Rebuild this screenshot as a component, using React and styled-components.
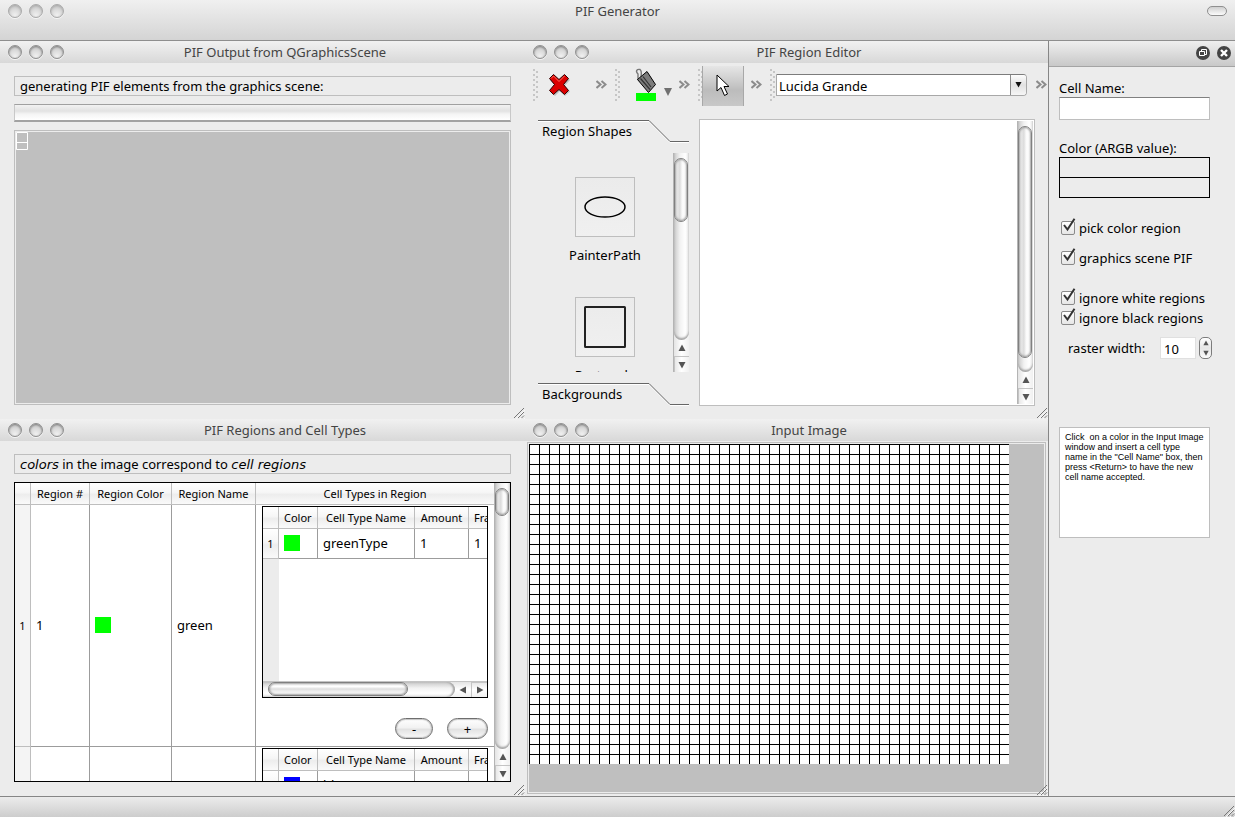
import React from "react";
import styled, { createGlobalStyle, css } from "styled-components";

const GlobalStyle = createGlobalStyle`
  *, *::before, *::after { box-sizing: border-box; }
  html, body { margin: 0; background: #ececec; }
  body, button, input, select, table {
    font-family: "Noto Sans", "Open Sans", sans-serif;
    font-size: 13px;
    line-height: 20px;
    color: #000;
  }
  button { padding: 0; margin: 0; border: 0; background: none; }
`;

const lineGrey = "#bebebe";
const barFill = "linear-gradient(#f0f0f0, #d4d4d4)";
const headFill = "linear-gradient(#fff 0%, #f6f6f6 45%, #ededed 55%, #fafafa 100%)";

/* ---------- application frame ---------- */

const Shell = styled.div`
  display: flex;
  flex-direction: column;
  height: 100vh;
`;

const AppBar = styled.header`
  display: flex;
  flex: none;
  justify-content: space-between;
  align-items: flex-start;
  height: 41px;
  padding: 4px 8px;
  background: ${barFill};
  border-bottom: 1px solid #8e8e8e;
`;

const AppTitle = styled.h1`
  margin: 0;
  font-size: 13px;
  font-weight: 400;
  line-height: 14px;
  color: #444;
`;

const BarSide = styled.div`
  display: flex;
  justify-content: ${(p) => (p.$end ? "flex-end" : "flex-start")};
  flex: 1;
`;

const ToolbarPill = styled.button`
  width: 20px;
  height: 10px;
  margin-top: 2px;
  border: 1px solid #8f8f8f;
  border-radius: 5px;
  background: linear-gradient(#cfcfcf, #fbfbfb);
`;

const Workspace = styled.main`
  display: flex;
  flex: 1;
  min-height: 0;
`;

const Desktop = styled.div`
  flex: 1;
  display: grid;
  grid-template-columns: minmax(0, 525fr) minmax(0, 523fr);
  grid-template-rows: minmax(0, 378fr) minmax(0, 377fr);
`;

const StatusBar = styled.footer`
  position: relative;
  flex: none;
  height: 21px;
  border-top: 1px solid #868686;
  background: linear-gradient(#ececec, #cdcdcd);
`;

/* ---------- windows ---------- */

const LightRow = styled.div`
  display: flex;
  gap: 7px;
`;

const Light = styled.button`
  width: 14px;
  height: 14px;
  border-radius: 50%;
  border: 1px solid ${(p) => (p.$soft ? "#aaa" : "#909090")};
  background: radial-gradient(circle at 50% 85%, #f0f0f0 0%, #dcdcdc 45%, #c8c8c8 80%);
  box-shadow: inset 0 1px 2px ${(p) => (p.$soft ? "#aaa" : "#808080")}, 0 1px 0 #f4f4f4;
`;

function Lights({ soft }) {
  return (
    <LightRow>
      {["Close", "Minimize", "Zoom"].map((n) => (
        <Light key={n} $soft={soft} aria-label={n} />
      ))}
    </LightRow>
  );
}

const Pane = styled.section`
  position: relative;
  display: flex;
  flex-direction: column;
  min-height: 0;
`;

const PaneBar = styled.div`
  display: flex;
  align-items: center;
  flex: none;
  height: 22px;
  padding: 0 19px 0 8px;
  background: linear-gradient(#f1f1f1, #d8d8d8);
`;

const PaneTitle = styled.h2`
  flex: 1;
  margin: 0;
  font-size: 13px;
  font-weight: 400;
  text-align: center;
  line-height: 22px;
  color: #444;
`;

const GripSvg = styled.svg`
  position: absolute;
  right: 0;
  bottom: 0;
`;

function ResizeGrip() {
  return (
    <GripSvg width="12" height="12" viewBox="0 0 12 12" aria-hidden="true">
      <path d="M2 12L12 2M6 12L12 6M10 12L12 10" transform="translate(0 1)" stroke="#f8f8f8" fill="none" />
      <path d="M1 11L11 1M5 11L11 5M8.500 11L11 8.500" stroke="#777" fill="none" />
    </GripSvg>
  );
}

function Window({ title, children }) {
  return (
    <Pane>
      <PaneBar>
        <Lights />
        <PaneTitle>{title}</PaneTitle>
      </PaneBar>
      {children}
      <ResizeGrip />
    </Pane>
  );
}

const PaneBody = styled.div`
  flex: 1;
  display: flex;
  flex-direction: column;
  gap: 8px;
  min-height: 0;
  padding: 13px 14px 14px;
`;

const Caption = styled.p`
  flex: none;
  height: 20px;
  margin: 0;
  padding: 0 5px;
  line-height: 18px;
  border: 1px solid ${lineGrey};
`;

const Slanted = styled.em`
  font-family: "DejaVu Sans", sans-serif;
`;

/* ---------- scroll bars ---------- */

const Scroll = styled.div`
  display: flex;
  flex: none;
  ${(p) =>
    p.$across
      ? css`
          height: 16px;
          background: linear-gradient(#e4e4e4, #fff 50%, #f0f0f0);
          border-top: 1px solid #c4c4c4;
        `
      : css`
          flex-direction: column;
          width: 16px;
          background: linear-gradient(to right, #e4e4e4, #fff 50%, #f0f0f0);
          border-left: 1px solid #b4b4b4;
        `}
`;

const Track = styled.div`
  flex: 1;
  min-width: 0;
  min-height: 0;
  overflow: hidden;
  ${(p) =>
    p.$across
      ? css`
          padding-left: 5px;
          border-radius: 0 8px 8px 0;
          background: linear-gradient(#c9c9c9, #f2f2f2 40%, #fff 75%, #e8e8e8);
          box-shadow: inset -2px 0 2px #a4a4a4;
        `
      : css`
          padding-top: 5px;
          border-radius: 0 0 8px 8px;
          background: linear-gradient(to right, #c9c9c9, #f2f2f2 40%, #fff 75%, #e8e8e8);
          box-shadow: inset 0 -2px 2px #a4a4a4;
        `}
`;

const Thumb = styled.div`
  border: 1px solid #808080;
  border-radius: 8px;
  box-shadow: inset 0 0 2px 1px #a0a0a0;
  ${(p) =>
    p.$across
      ? css`
          width: ${p.$size};
          height: 14px;
          background: linear-gradient(#f4f4f4 0%, #fff 30%, #dedede 50%, #fff 90%);
        `
      : css`
          height: ${p.$size};
          width: 14px;
          background: linear-gradient(to right, #f4f4f4 0%, #dcdcdc 40%, #fafafa 60%, #fff 90%);
        `}
`;

const Arrow = styled.button`
  display: flex;
  align-items: center;
  justify-content: center;
  flex: none;
  width: ${(p) => (p.$across ? "16px" : "100%")};
  height: ${(p) => (p.$across ? "100%" : "16px")};
  & + & {
    ${(p) => (p.$across ? "border-left" : "border-top")}: 1px solid #c4c4c4;
  }
`;

const arrows = {
  up: "M4 0.500L7.500 7H0.500Z",
  down: "M4 7.500L0.500 1H7.500Z",
  left: "M0.500 4L7 0.500V7.500Z",
  right: "M7.500 4L1 0.500V7.500Z",
};

function Triangle({ dir, size = 8, fill = "#555" }) {
  return (
    <svg width={size} height={size} viewBox="0 0 8 8" aria-hidden="true">
      <path d={arrows[dir]} fill={fill} />
    </svg>
  );
}

function ScrollBar({ across, size }) {
  const dirs = across ? ["left", "right"] : ["up", "down"];
  return (
    <Scroll $across={across}>
      <Track $across={across}>
        <Thumb $across={across} $size={size} />
      </Track>
      {dirs.map((d) => (
        <Arrow key={d} $across={across} aria-label={`Scroll ${d}`}>
          <Triangle dir={d} />
        </Arrow>
      ))}
    </Scroll>
  );
}

/* ---------- PIF output ---------- */

const ProgressTrack = styled.div`
  flex: none;
  height: 18px;
  border: 1px solid #c8c8c8;
  border-top-color: #a0a0a0;
  border-bottom: 2px solid #a2a2a2;
  background: linear-gradient(#f2f2f2, #e2e2e2 40%, #f4f4f4 60%, #fff);
`;

const SceneFrame = styled.div`
  flex: 1;
  padding: 1px;
  border: 1px solid ${lineGrey};
`;

const Scene = styled.div`
  height: 100%;
  background: #bfbfbf;
`;

/* ---------- region editor ---------- */

const ToolBar = styled.div`
  display: flex;
  flex: none;
  height: 43px;
  padding-left: 8px;
`;

const ToolGroup = styled.div`
  display: flex;
  align-items: center;
  flex: ${(p) => (p.$width ? "none" : "1")};
  width: ${(p) => p.$width || "auto"};
  min-width: 0;
`;

const Handle = styled.div`
  flex: none;
  width: ${(p) => (p.$narrow ? "4px" : "6px")};
  height: 32px;
  background-image: radial-gradient(circle at 1px 1px, #c6c6c6 1px, transparent 1px),
    radial-gradient(circle at 4px 3px, #c6c6c6 1px, transparent 1px);
  background-size: 6px 5px;
`;

const ToolButton = styled.button`
  display: flex;
  align-items: center;
  justify-content: center;
  flex: none;
  width: ${(p) => p.$width};
  height: 40px;
  margin-left: ${(p) => p.$indent || "0"};
  ${(p) =>
    p.$pressed &&
    css`
      align-self: flex-end;
      background: linear-gradient(#e6e6e6, #c4c4c4 50%, #bcbcbc 60%, #c8c8c8);
      border-left: 1px solid #a8a8a8;
      border-right: 1px solid #a8a8a8;
    `}
`;

const MoreButton = styled.button`
  flex: none;
  display: flex;
  width: 11px;
  margin-left: auto;
  margin-right: ${(p) => (p.$last ? "1px" : "8px")};
`;

function More({ last }) {
  return (
    <MoreButton $last={last} aria-label="More tools">
      <svg width="11" height="9" viewBox="0 0 11 9">
        <path d="M0.500 1L4.500 4.500L0.500 8M5.500 1L9.500 4.500L5.500 8" fill="none" stroke="#8c8c8c" strokeWidth="2" />
      </svg>
    </MoreButton>
  );
}

const ComboWrap = styled.div`
  position: relative;
  flex: 1;
  height: 22px;
  margin-right: 9px;
`;

const Combo = styled.select`
  appearance: none;
  display: block;
  width: 100%;
  height: 22px;
  padding: 1px 24px 0 2px;
  border: 1px solid #a8a8a8;
  border-top-color: #7c7c7c;
  border-radius: 0 4px 4px 0;
  background: #fff;
`;

const ComboArrow = styled.span`
  position: absolute;
  top: 1px;
  right: 1px;
  display: flex;
  align-items: center;
  justify-content: center;
  width: 16px;
  height: 20px;
  border-left: 1px solid #8c8c8c;
  border-radius: 0 3px 3px 0;
  background: linear-gradient(#fdfdfd, #e2e2e2 50%, #f6f6f6);
  pointer-events: none;
`;

const EditorBody = styled.div`
  flex: 1;
  display: flex;
  gap: 10px;
  min-height: 0;
  padding: 13px;
`;

const ToolBox = styled.div`
  display: flex;
  flex-direction: column;
  gap: 11px;
  flex: none;
  width: 151px;
  min-height: 0;
  padding: 1px 0;
`;

const Tab = styled.button`
  position: relative;
  flex: none;
  height: 22px;
  padding-left: 4px;
  text-align: left;
`;

const TabEdge = styled.svg`
  position: absolute;
  left: 0;
  top: 0;
`;

function ToolTab({ children }) {
  return (
    <Tab>
      <TabEdge width="151" height="23" viewBox="0 0 151 23" aria-hidden="true">
        <path d="M0 1.500H111L132 22.500H151" fill="none" stroke="#fff" />
        <path d="M0 0.500H111L132 21.500H151" fill="none" stroke="#666" />
      </TabEdge>
      {children}
    </Tab>
  );
}

const ShapeArea = styled.div`
  flex: 1;
  display: flex;
  min-height: 0;
`;

const ShapeList = styled.div`
  flex: 1;
  display: flex;
  flex-direction: column;
  align-items: center;
  gap: 32px;
  overflow: hidden;
  padding: 24px 1px 0 0;
`;

const Shape = styled.div`
  display: flex;
  flex: none;
  flex-direction: column;
  align-items: center;
  gap: 8px;
`;

const ShapeButton = styled.button`
  width: 60px;
  height: 60px;
  border: 1px solid ${lineGrey};
  background: linear-gradient(#ebebeb, #f0f0f0);
`;

const Paper = styled.div`
  flex: 1;
  display: flex;
  justify-content: flex-end;
  padding: 1px;
  border: 1px solid ${lineGrey};
  background: #fff;
`;

/* ---------- tables ---------- */

const TableFrame = styled.div`
  display: flex;
  flex-direction: ${(p) => (p.$inner ? "column" : "row")};
  flex: ${(p) => (p.$inner ? "none" : "1")};
  height: ${(p) => (p.$inner ? "192px" : "auto")};
  min-height: 0;
  overflow: hidden;
  border: 1px solid #000;
  background: #fff;
`;

const TableView = styled.div`
  flex: 1;
  min-width: 0;
  min-height: 0;
  overflow: hidden;
  ${(p) => p.$gutter && "background: linear-gradient(to right, #ececec 16px, #fff 16px);"}
`;

const Grid = styled.table`
  width: ${(p) => p.$width};
  table-layout: fixed;
  border-collapse: separate;
  border-spacing: 0;
`;

const Col = styled.col`
  width: ${(p) => p.$width};
`;

const HeadCell = styled.th`
  height: 22px;
  padding: ${(p) => (p.$left ? "0 0 0 5px" : "0")};
  text-align: ${(p) => (p.$left ? "left" : "center")};
  font-size: 11px;
  font-weight: 400;
  line-height: 20px;
  white-space: nowrap;
  border-right: ${(p) => (p.$last ? "0" : `1px solid ${lineGrey}`)};
  border-bottom: 1px solid ${lineGrey};
  background: ${headFill};
`;

const RowHead = styled.th`
  height: ${(p) => p.$height};
  padding: 0;
  font-size: 11px;
  font-weight: 400;
  border-right: 1px solid ${lineGrey};
  border-bottom: 1px solid ${lineGrey};
  background: ${(p) => (p.$flat ? "#f4f4f4" : headFill)};
`;

const Cell = styled.td`
  padding: 0 5px 2px;
  border-right: 1px solid #9c9c9c;
  border-bottom: 1px solid #9c9c9c;
`;

const NestCell = styled.td`
  padding: 1px 6px 0;
  vertical-align: top;
  border-bottom: 1px solid #9c9c9c;
`;

const Swatch = styled.div`
  width: 16px;
  height: 16px;
  background: ${(p) => p.$color};
`;

const PillRow = styled.div`
  display: flex;
  justify-content: flex-end;
  gap: 14px;
  margin-top: 20px;
`;

const Pill = styled.button`
  width: ${(p) => p.$width};
  height: 21px;
  border: 1px solid #6e6e6e;
  border-radius: 11px;
  background: linear-gradient(#fff, #f2f2f2 45%, #e2e2e2 55%, #fafafa);
  box-shadow: inset 0 0 1px 1px #c4c4c4;
  line-height: 18px;
`;

function CellTypes({ color, name }) {
  return (
    <TableFrame $inner>
      <TableView $gutter>
        <Grid $width="276px">
          <colgroup>
            <Col $width="16px" />
            <Col $width="39px" />
            <Col $width="97px" />
            <Col $width="54px" />
            <Col $width="70px" />
          </colgroup>
          <thead>
            <tr>
              <HeadCell />
              <HeadCell $left>Color</HeadCell>
              <HeadCell>Cell Type Name</HeadCell>
              <HeadCell>Amount</HeadCell>
              <HeadCell $left>Fraction</HeadCell>
            </tr>
          </thead>
          <tbody>
            <tr>
              <RowHead $height="30px">1</RowHead>
              <Cell><Swatch $color={color} /></Cell>
              <Cell>{name}</Cell>
              <Cell>1</Cell>
              <Cell>1</Cell>
            </tr>
          </tbody>
        </Grid>
      </TableView>
      <ScrollBar across size="140px" />
    </TableFrame>
  );
}

/* ---------- input image ---------- */

const ImageFrame = styled.div`
  flex: 1;
  min-height: 0;
  margin: 1px 2px 2px;
  padding: 1px;
  border: 1px solid ${lineGrey};
`;

const ImageArea = styled.div`
  height: 100%;
  overflow: hidden;
  background: #bfbfbf;
`;

const PixelGrid = styled.div`
  width: 480px;
  height: 320px;
  background-color: #fff;
  background-image: linear-gradient(#000 1px, transparent 1px),
    linear-gradient(to right, #000 1px, transparent 1px);
  background-size: 10px 10px;
`;

/* ---------- dock ---------- */

const Dock = styled.aside`
  flex: none;
  width: 187px;
  border-left: 1px solid #868686;
`;

const DockBar = styled.div`
  display: flex;
  align-items: center;
  justify-content: flex-end;
  gap: 7px;
  height: 26px;
  padding: 0 4px 2px 0;
  background: linear-gradient(#efefef, #c8c8c8);
  border-bottom: 1px solid #a4a4a4;
`;

const RoundButton = styled.button`
  display: flex;
  width: 14px;
  height: 14px;
`;

const DockBody = styled.div`
  display: flex;
  flex-direction: column;
  padding: 11px 25px 0 10px;
`;

const FieldLabel = styled.label`
  height: 19px;
`;

const TextField = styled.input`
  width: 100%;
  height: 23px;
  margin-bottom: 18px;
  padding: 0 3px;
  border: 1px solid ${lineGrey};
  border-top-color: #808080;
  background: #fff;
`;

const ColorBoxes = styled.div`
  display: flex;
  flex-direction: column;
  height: 41px;
  margin-bottom: 20px;
  border: 1px solid #000;
`;

const ColorBox = styled.div`
  flex: 1;
  & + & { border-top: 1px solid #000; }
`;

const Check = styled.label`
  position: relative;
  display: flex;
  align-items: center;
  gap: 4px;
  height: 20px;
  margin-bottom: ${(p) => p.$after || "0"};
  padding-left: 2px;
  white-space: nowrap;
`;

const CheckBox = styled.input`
  appearance: none;
  flex: none;
  width: 14px;
  height: 14px;
  margin: 0;
  border: 1px solid #8a8a8a;
  border-radius: 2px;
  background: linear-gradient(#fff, #e6e6e6);
`;

const CheckMark = styled.svg`
  position: absolute;
  left: 2px;
  top: 0;
  pointer-events: none;
`;

function CheckRow({ children, after }) {
  return (
    <Check $after={after}>
      <CheckBox type="checkbox" defaultChecked />
      <CheckMark width="16" height="16" viewBox="0 0 16 16" aria-hidden="true">
        <path d="M3 7L6.500 11.500L13.500 0.800" fill="none" stroke="#333" strokeWidth="2" />
      </CheckMark>
      {children}
    </Check>
  );
}

const RasterRow = styled.div`
  display: flex;
  align-items: center;
  height: 24px;
  margin-top: 8px;
  padding-left: 9px;
`;

const RasterLabel = styled.label`
  flex: none;
  width: 92px;
  white-space: nowrap;
`;

const RasterInput = styled.input`
  width: 36px;
  height: 22px;
  margin-right: 3px;
  padding: 2px 3px 0;
  border: 1px solid #e0e0e0;
  background: #fff;
`;

const Stepper = styled.div`
  display: flex;
  flex-direction: column;
  flex: none;
  width: 13px;
  height: 22px;
  border: 1px solid #7c7c7c;
  border-radius: 5px;
  background: linear-gradient(#fff, #e6e6e6 50%, #fafafa);
`;

const Step = styled.button`
  flex: 1;
  display: flex;
  align-items: center;
  justify-content: center;
`;

const Hint = styled.p`
  min-height: 111px;
  margin: 67px 0 0;
  padding: 4px 5px;
  border: 1px solid ${lineGrey};
  background: #fff;
  font-family: "Liberation Sans", Arial, sans-serif;
  font-size: 9px;
  line-height: 10px;
  white-space: pre-line;
`;

/* ---------- page ---------- */

export default function App() {
  return (
    <Shell>
      <GlobalStyle />
      <AppBar>
        <BarSide><Lights soft /></BarSide>
        <AppTitle>PIF Generator</AppTitle>
        <BarSide $end><ToolbarPill aria-label="Toggle toolbar" /></BarSide>
      </AppBar>

      <Workspace>
        <Desktop>
          <Window title="PIF Output from QGraphicsScene">
            <PaneBody>
              <Caption>generating PIF elements from the graphics scene:</Caption>
              <ProgressTrack role="progressbar" aria-label="PIF generation" />
              <SceneFrame>
                <Scene>
                  <svg width="12" height="18" viewBox="0 0 12 18" display="block" aria-hidden="true">
                    <path d="M0.500 0.500H11.500V17.500H0.500ZM0.500 10.500H11.500" fill="none" stroke="#fff" />
                  </svg>
                </Scene>
              </SceneFrame>
            </PaneBody>
          </Window>

          <Window title="PIF Region Editor">
            <ToolBar>
              <ToolGroup $width="82px">
                <Handle />
                <ToolButton $width="40px" aria-label="Delete">
                  <svg width="24" height="24" viewBox="0 0 24 24">
                    <path d="M7 2L12 7L17 2L22 6L16.500 12L22 17.500L17 22L12 17L7 22L2 17.500L7.500 12L2 6Z" fill="#999" opacity="0.500" transform="translate(1 1)" />
                    <path d="M6.500 1.500L12 6.500L17.500 1.500L21.500 5.500L16.500 11.500L21.500 17.500L17.500 21.500L12 16.500L6.500 21.500L2.500 17.500L7.500 11.500L2.500 5.500Z" fill="#dc0000" stroke="#2c0000" />
                    <path d="M4 5.500L6.500 3L12 8.500L17.500 3" fill="none" stroke="#ff6a5a" />
                  </svg>
                </ToolButton>
                <More />
              </ToolGroup>
              <ToolGroup $width="83px">
                <Handle />
                <ToolButton $width="40px" $indent="12px" aria-label="Fill color">
                  <svg width="40" height="36" viewBox="0 0 40 36">
                    <rect x="3" y="26" width="20" height="8" fill="#0f0" />
                    <path d="M5 13V7C2 4 4 2 7 2.500C9 4 8.500 6 8 10" fill="none" stroke="#777" strokeWidth="1.400" />
                    <path d="M4.500 12.500L14 4.500L22.500 17.500L15.500 25.500Z" fill="#7c7c7c" stroke="#000" />
                    <path d="M7.500 11.500L17 22.500M10 9.500L18 20" stroke="#333" strokeWidth="1.200" />
                    <path d="M31 21H39L35 29Z" fill="#707070" />
                  </svg>
                </ToolButton>
                <More />
              </ToolGroup>
              <ToolGroup $width="72px">
                <Handle $narrow />
                <ToolButton $width="42px" $pressed aria-label="Pointer">
                  <svg width="14" height="24" viewBox="0 0 14 24">
                    <path d="M1 1V17L5 13.500L8.500 21.500L11.500 20L8 12.500H13Z" fill="#fff" stroke="#000" />
                  </svg>
                </ToolButton>
                <More />
              </ToolGroup>
              <ToolGroup>
                <Handle />
                <ComboWrap>
                  <Combo aria-label="Font" defaultValue="Lucida Grande">
                    <option>Lucida Grande</option>
                  </Combo>
                  <ComboArrow><Triangle dir="down" size={7} fill="#111" /></ComboArrow>
                </ComboWrap>
                <More last />
              </ToolGroup>
            </ToolBar>
            <EditorBody>
              <ToolBox>
                <ToolTab>Region Shapes</ToolTab>
                <ShapeArea>
                  <ShapeList>
                    <Shape>
                      <ShapeButton aria-label="PainterPath">
                        <svg width="58" height="58" viewBox="0 0 58 58" display="block">
                          <ellipse cx="29" cy="29" rx="20" ry="10" fill="none" stroke="#000" strokeWidth="1.500" />
                        </svg>
                      </ShapeButton>
                      PainterPath
                    </Shape>
                    <Shape>
                      <ShapeButton aria-label="Rectangle">
                        <svg width="58" height="58" viewBox="0 0 58 58" display="block">
                          <rect x="9" y="9" width="40" height="40" rx="0.500" fill="none" stroke="#222" strokeWidth="2" />
                        </svg>
                      </ShapeButton>
                      Rectangle
                    </Shape>
                  </ShapeList>
                  <ScrollBar size="64px" />
                </ShapeArea>
                <ToolTab>Backgrounds</ToolTab>
              </ToolBox>
              <Paper>
                <ScrollBar size="calc(100% - 14px)" />
              </Paper>
            </EditorBody>
          </Window>

          <Window title="PIF Regions and Cell Types">
            <PaneBody>
              <Caption><Slanted>colors</Slanted> in the image correspond to <Slanted>cell regions</Slanted></Caption>
              <TableFrame>
                <TableView>
                  <Grid $width="100%">
                    <colgroup>
                      <Col $width="16px" />
                      <Col $width="59px" />
                      <Col $width="82px" />
                      <Col $width="84px" />
                      <Col />
                    </colgroup>
                    <thead>
                      <tr>
                        <HeadCell />
                        <HeadCell>Region #</HeadCell>
                        <HeadCell>Region Color</HeadCell>
                        <HeadCell>Region Name</HeadCell>
                        <HeadCell $last>Cell Types in Region</HeadCell>
                      </tr>
                    </thead>
                    <tbody>
                      <tr>
                        <RowHead $height="242px" $flat>1</RowHead>
                        <Cell>1</Cell>
                        <Cell><Swatch $color="#0f0" /></Cell>
                        <Cell>green</Cell>
                        <NestCell>
                          <CellTypes color="#0f0" name="greenType" />
                          <PillRow>
                            <Pill $width="38px" aria-label="Remove cell type">-</Pill>
                            <Pill $width="41px" aria-label="Add cell type">+</Pill>
                          </PillRow>
                        </NestCell>
                      </tr>
                      <tr>
                        <RowHead $height="242px" $flat />
                        <Cell />
                        <Cell />
                        <Cell />
                        <NestCell>
                          <CellTypes color="#00f" name="blueType" />
                        </NestCell>
                      </tr>
                    </tbody>
                  </Grid>
                </TableView>
                <ScrollBar size="28px" />
              </TableFrame>
            </PaneBody>
          </Window>

          <Window title="Input Image">
            <ImageFrame>
              <ImageArea>
                <PixelGrid role="img" aria-label="Input image pixels" />
              </ImageArea>
            </ImageFrame>
          </Window>
        </Desktop>

        <Dock>
          <DockBar>
            <RoundButton aria-label="Float">
              <svg width="14" height="14" viewBox="0 0 14 14">
                <circle cx="7" cy="7" r="7" fill="#444" />
                <path d="M5.500 5.500V3.500H10.500V8.500H8.500M3.500 5.500H8.500V9.500H3.500Z" fill="none" stroke="#fff" />
              </svg>
            </RoundButton>
            <RoundButton aria-label="Close">
              <svg width="14" height="14" viewBox="0 0 14 14">
                <circle cx="7" cy="7" r="7" fill="#444" />
                <path d="M4 4L10 10M10 4L4 10" stroke="#fff" strokeWidth="2.400" />
              </svg>
            </RoundButton>
          </DockBar>
          <DockBody>
            <FieldLabel htmlFor="cell-name">Cell Name:</FieldLabel>
            <TextField id="cell-name" />
            <FieldLabel as="div">Color (ARGB value):</FieldLabel>
            <ColorBoxes>
              <ColorBox />
              <ColorBox />
            </ColorBoxes>
            <CheckRow after="10px">pick color region</CheckRow>
            <CheckRow after="20px">graphics scene PIF</CheckRow>
            <CheckRow>ignore white regions</CheckRow>
            <CheckRow>ignore black regions</CheckRow>
            <RasterRow>
              <RasterLabel htmlFor="raster">raster width:</RasterLabel>
              <RasterInput id="raster" defaultValue="10" />
              <Stepper>
                <Step aria-label="Increase"><Triangle dir="up" size={6} /></Step>
                <Step aria-label="Decrease"><Triangle dir="down" size={6} /></Step>
              </Stepper>
            </RasterRow>
            <Hint>
              {"Click \u00a0on a color in the Input Image\nwindow and insert a cell type\nname in the \"Cell Name\" box, then\npress <Return> to have the new\ncell name accepted."}
            </Hint>
          </DockBody>
        </Dock>
      </Workspace>

      <StatusBar><ResizeGrip /></StatusBar>
    </Shell>
  );
}
